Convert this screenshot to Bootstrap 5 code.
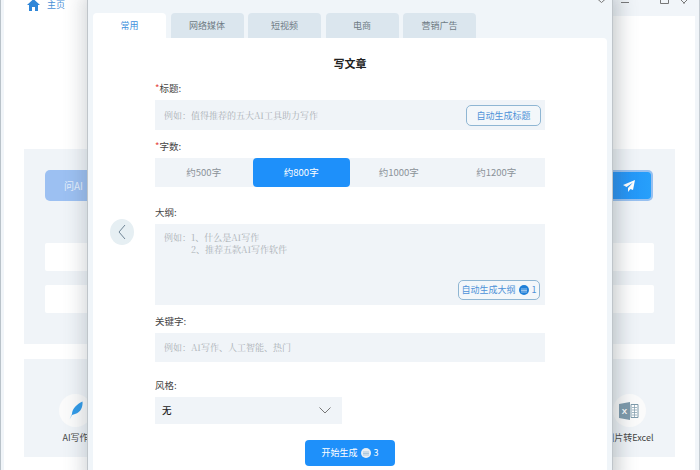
<!DOCTYPE html>
<html lang="zh"><head><meta charset="utf-8"><title>写文章</title>
<link rel="stylesheet" href="https://cdn.jsdelivr.net/npm/bootstrap@5.3.0/dist/css/bootstrap.min.css">
<style>
html,body{margin:0;height:470px;width:700px;overflow:hidden;background:#fff}
body{font-family:"Noto Sans CJK SC","Liberation Sans",sans-serif;font-size:9px;color:#333}
.app-frame{position:relative;height:470px;background:#f1f5f9;padding:0 4px 0 3px;border-left:1px solid #b9c2c9;border-right:1px solid #c5ccd2}
.app-sheet{background:#fff;height:470px;display:flex;flex-direction:column}
.top-bar{height:16px;padding-left:23px;gap:7px;color:#4a8fd6;margin-top:-3px;flex:none}
.top-bar span{line-height:10px}
.panel-ask{margin:136px 20px 0 20px;height:195px;background:#f0f4f8;padding:21px 21px;flex:none}
.ask-btn{width:120px;height:31px;background:#9cc0f2;color:#e4eefc;border-radius:5px;padding-left:19px;font-size:10px}
.send-btn{width:44px;height:27px;background:linear-gradient(90deg,#1f8df5,#27a0fb);border-radius:3px;box-shadow:0 0 0 2px #97c0f0;margin:2px 3px 0 0}
.ask-line{height:28px;background:#fff;margin-top:42px;border-radius:2px}
.ask-line+.ask-line{margin-top:14px}
.panel-tools{margin:15px 20px 0 20px;height:98px;background:#f0f4f8;padding:35px 21.5px 0 35px;flex:none}
.tool-circle{width:33px;height:33px;border-radius:50%;background:#fbfbfb}
.tool-name{font-size:9px;color:#444;margin-top:4px;white-space:nowrap;line-height:13px}
.dlg{position:absolute;left:86px;top:-6px;width:526px;height:490px;background:#f0f5f9;border-left:1px solid #bfc5ca;border-right:1px solid #bfc5ca;box-shadow:-8px 0 16px rgba(90,100,110,.16),8px 0 16px rgba(90,100,110,.26);padding:19px 5px 0 5px}
.dlg-close{position:absolute;right:6px;top:4px}
.tab-row{gap:4.500px;height:25px}
.tab-item{width:73px;height:25px;background:#dbe6ee;color:#6f7c85;font-size:9px;border-radius:4px 4px 0 0;padding:0}
.tab-item.is-on{background:#fff;color:#3f8fdc}
.tab-item:hover{color:#6f7c85}
.dlg-body{background:#fff;height:446px;border-radius:0 4px 0 0;position:relative;padding:17px 62px 0 62px}
.dlg-title{font-size:11px;font-weight:700;color:#222;text-align:center;line-height:16px;margin-bottom:10px}
.fld-label{font-size:9.500px;line-height:14px;margin-bottom:5px;color:#444}
.sty-label{padding-top:7px}
.req{color:#e4453c}
.fld{background:#f0f4f8;border:0;border-radius:0;font-size:9px;padding:0 9px;color:#999;box-shadow:none}
.fld::placeholder{color:#aab0b5;font-family:"Noto Serif CJK SC","Noto Sans CJK SC",serif;font-size:9px}
.fld:focus{background:#f0f4f8;box-shadow:none}
.fld-wrap{position:relative;margin-bottom:9px}
.fld-one{height:30px}
.seg{display:flex;height:29px;background:#f0f4f8;margin-bottom:18px}
.seg-btn{flex:0 0 97.5px;border:0;background:transparent;color:#8b9298;font-size:9.500px;padding:0;border-radius:4px}
.seg-btn.is-on{background:#1e90fa;color:#fff}
.seg-btn.is-on:hover{background:#1e90fa;color:#fff}
.area{height:81px;padding-top:8px;line-height:12px;resize:none}
.auto-btn{position:absolute;right:4px;background:#f3f7fa;border:1px solid #8fb6d3;border-radius:5px;color:#4e92d8;font-size:9px;padding:0;height:21px;white-space:nowrap;display:flex;align-items:center;justify-content:center}
.auto-one{top:5px;width:75px}
.auto-two{bottom:5px;width:82px;height:20px;gap:3px;right:5px}
.coin{display:inline-flex;width:10px;height:10px;border-radius:50%;background:#1e7fd8;align-items:center;justify-content:center}
.kw{height:29px}
.sel{width:187px;height:27px;background:#f0f4f8;padding:0 11px 0 7px;color:#222;font-size:9.500px;font-weight:500}
.go-btn{width:90px;height:26px;background:#1e90fa;border:0;color:#fff;font-size:9px;border-radius:4px;padding:0;gap:3px;margin:16px auto 0}
.go-btn:hover{background:#1e90fa;color:#fff}
.go-btn .coin{background:#e8eef4}
.nav-prev{position:absolute;left:17px;top:181px;width:24px;height:26px;border-radius:50%;background:#e6eff3}
.win-ctl{position:absolute;right:4px;top:0;width:83px;height:16px;background:#f1f5f9;padding-left:9px}
.win-sq{margin:0 10px 0 31px}
</style></head><body>
<div class="app-frame">
 <div class="app-sheet">
  <div class="top-bar d-flex align-items-center">
   <svg width="13" height="12" viewBox="0 0 13 12"><path d="M6.500 0 13 6h-2v6H8V8H5v4H2V6H0z" fill="#2f86d8"/></svg><span>主页</span>
  </div>
  <div class="panel-ask">
   <div class="d-flex justify-content-between">
    <div class="ask-btn d-flex align-items-center"><span>问AI</span></div>
    <div class="send-btn d-flex align-items-center justify-content-center">
     <svg width="12" height="12" viewBox="0 0 12 12"><path d="M12 0 0 5l3.500 2L10 2.500 5 8v4l2.500-3L10 10z" fill="#fff"/></svg>
    </div>
   </div>
   <div class="ask-line"></div><div class="ask-line"></div>
  </div>
  <div class="panel-tools d-flex justify-content-between">
   <div class="d-flex flex-column align-items-center"><div class="tool-circle d-flex align-items-center justify-content-center">
     <svg width="14" height="19" viewBox="0 0 14 19"><path d="M.500 18.500 3 13C3 8 8 3 13.500.500c.5 5-1.500 11-7.500 12.500l-3 1z" fill="#2f9ae8"/></svg></div>
    <div class="tool-name">AI写作</div></div>
   <div class="d-flex flex-column align-items-center"><div class="tool-circle d-flex align-items-center justify-content-center">
     <svg width="20" height="18" viewBox="0 0 20 18"><path d="M0 2 11 0v18L0 16z" fill="#7d9aab"/><path d="M12 2.500h7v13h-7z" fill="#fff" stroke="#7d9aab"/><path d="M13 5.500h5M13 8h5M13 10.500h5M13 13h5M15.500 3v12" stroke="#7d9aab" stroke-width=".7"/><text x="5.500" y="12" font-size="8" font-weight="700" fill="#fff" text-anchor="middle" font-family="Liberation Sans">X</text></svg></div>
    <div class="tool-name">图片转Excel</div></div>
  </div>
 </div>
 <div class="win-ctl d-flex align-items-start">
  <svg width="8" height="4" viewBox="0 0 8 4"><path d="M0 2.500h8" stroke="#777"/></svg>
  <svg class="win-sq" width="9" height="4" viewBox="0 0 9 4"><path d="M.500 0v3.500h8V0" fill="none" stroke="#777"/></svg>
  <svg width="10" height="4" viewBox="0 0 10 4"><path d="M2 0l3.500 3.500M8 0 4.500 3.500" fill="none" stroke="#777"/></svg>
 </div>
 <div class="dlg">
  <svg class="dlg-close" width="9" height="5" viewBox="0 0 9 5"><path d="M.500 1 4.500 4.500M8.500 1 4.500 4.500" fill="none" stroke="#777"/></svg>
  <nav class="nav tab-row">
   <a class="nav-link tab-item is-on d-flex align-items-center justify-content-center">常用</a>
   <a class="nav-link tab-item d-flex align-items-center justify-content-center">网络媒体</a>
   <a class="nav-link tab-item d-flex align-items-center justify-content-center">短视频</a>
   <a class="nav-link tab-item d-flex align-items-center justify-content-center">电商</a>
   <a class="nav-link tab-item d-flex align-items-center justify-content-center">营销广告</a>
  </nav>
  <div class="dlg-body">
   <div class="nav-prev d-flex align-items-center justify-content-center">
    <svg width="8" height="16" viewBox="0 0 8 16"><path d="M7 1 1 8l6 7" fill="none" stroke="#6f8596"/></svg>
   </div>
   <div class="dlg-title">写文章</div>
   <div class="fld-label"><span class="req">*</span>标题:</div>
   <div class="fld-wrap">
    <input class="form-control fld fld-one" placeholder="例如&#65306;值得推荐的五大AI工具助力写作">
    <button class="btn auto-btn auto-one">自动生成标题</button>
   </div>
   <div class="fld-label"><span class="req">*</span>字数:</div>
   <div class="seg">
    <button class="btn seg-btn">约500字</button>
    <button class="btn seg-btn is-on">约800字</button>
    <button class="btn seg-btn">约1000字</button>
    <button class="btn seg-btn">约1200字</button>
   </div>
   <div class="fld-label">大纲:</div>
   <div class="fld-wrap">
    <textarea class="form-control fld area" placeholder="例如&#65306;1、什么是AI写作&#10;&#12288;&#12288;&#12288;2、推荐五款AI写作软件"></textarea>
    <button class="btn auto-btn auto-two">自动生成大纲<span class="coin"><svg width="6" height="5" viewBox="0 0 6 5"><path d="M0 1h6M0 2.500h6M0 4h6" stroke="#cfe3f7" stroke-width=".7"/></svg></span><span>1</span></button>
   </div>
   <div class="fld-label">关键字:</div>
   <div class="fld-wrap">
    <input class="form-control fld kw" placeholder="例如&#65306;AI写作、人工智能、热门">
   </div>
   <div class="fld-label sty-label">风格:</div>
   <div class="sel d-flex align-items-center justify-content-between"><span>无</span>
    <svg width="12" height="7" viewBox="0 0 12 7"><path d="M.500.500 6 6l5.500-5.500" fill="none" stroke="#777"/></svg>
   </div>
   <button class="btn go-btn d-flex align-items-center justify-content-center">开始生成<span class="coin"><svg width="6" height="5" viewBox="0 0 6 5"><path d="M0 1h6M0 2.500h6M0 4h6" stroke="#8fb6d3" stroke-width=".7"/></svg></span><span>3</span></button>
  </div>
 </div>
</div>
<script src="https://cdn.jsdelivr.net/npm/bootstrap@5.3.0/dist/js/bootstrap.bundle.min.js"></script>
</body></html>
